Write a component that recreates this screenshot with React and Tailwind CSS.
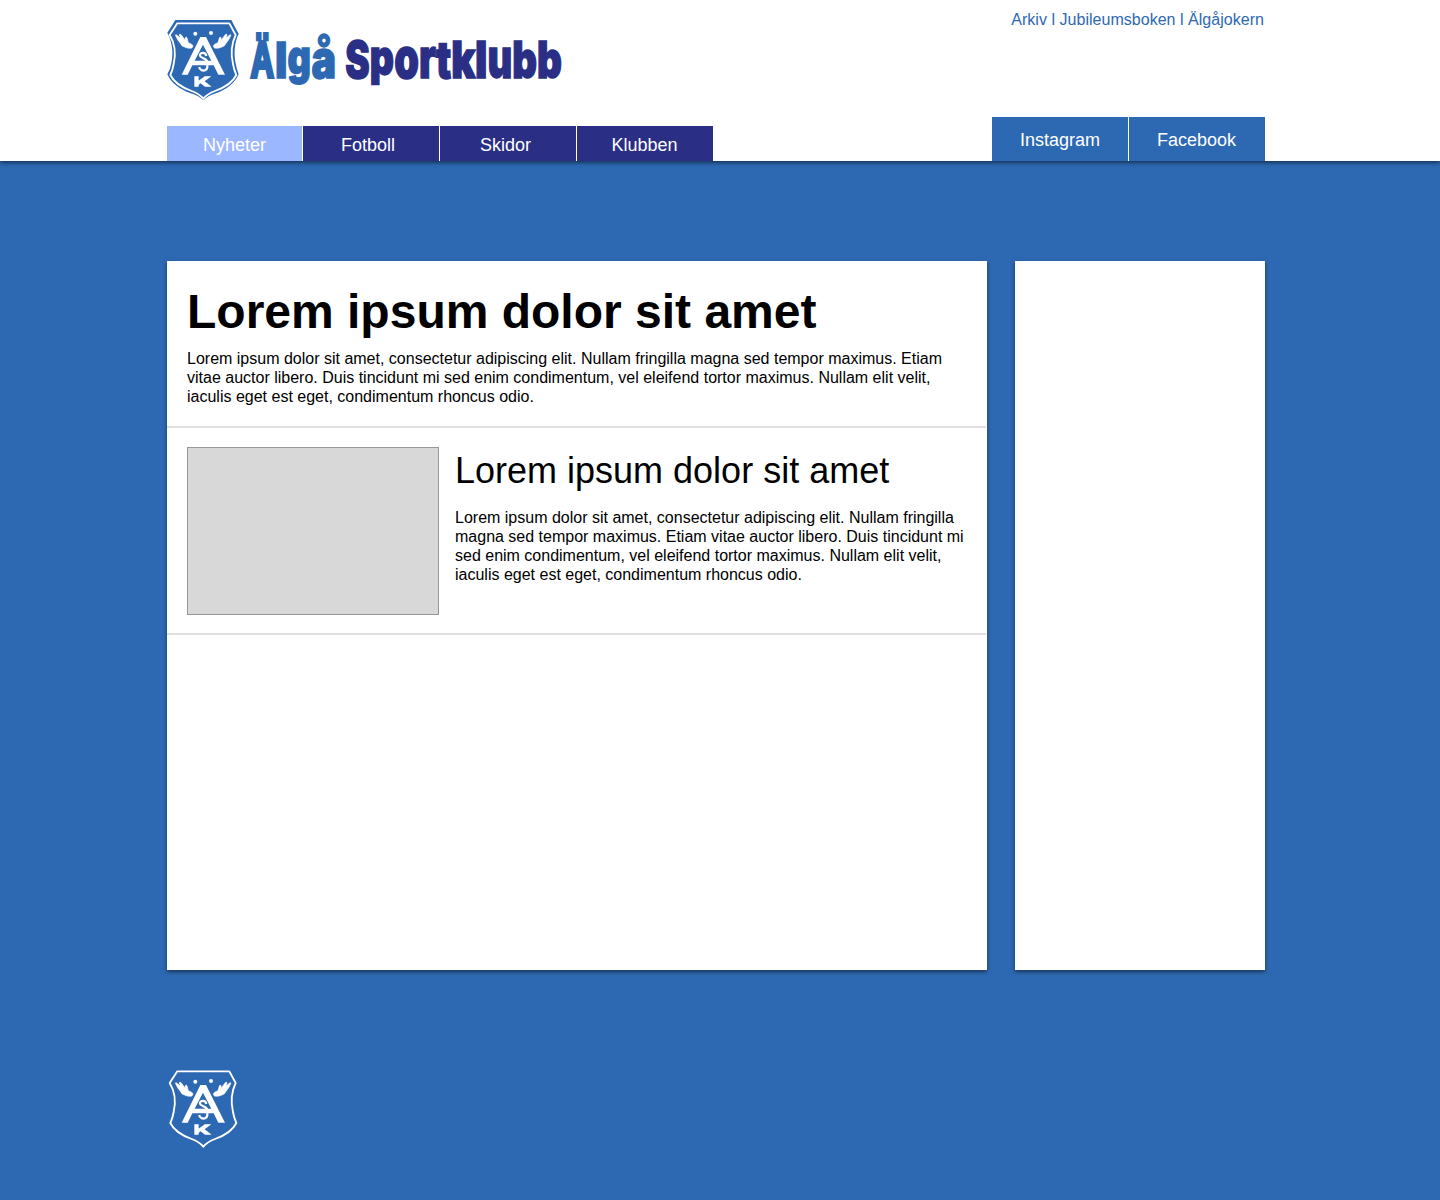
const LOREM =
  'Lorem ipsum dolor sit amet, consectetur adipiscing elit. Nullam fringilla magna sed tempor maximus. Etiam vitae auctor libero. Duis tincidunt mi sed enim condimentum, vel eleifend tortor maximus. Nullam elit velit, iaculis eget est eget, condimentum rhoncus odio.';

const OUTLINE =
  'M52 34 H208 L227 69 C213 98 213 130 219 156 Q222 174 229 189 C216 216 190 228 165 237 C148 243 138 250 130 260 C122 250 112 243 95 237 C70 228 44 216 31 189 Q38 174 41 156 C47 130 47 98 29 69 Z';

function Antler() {
  return (
    <path d="M46 69 Q48 67 51 70 L62 79 L58 69 Q59 64 63 68 L73 81 L76 85 L76 77 Q79 73 81 78 L85 92 Q97 96 99 101 L96 108 Q83 110 76 106 Q64 103 61 94 Q52 84 46 69 Z" />
  );
}

function Emblem({ filled = false }) {
  return (
    <svg viewBox="0 0 270 285" className="block h-[95px] w-[90px] shrink-0" role="img" aria-label="ÄSK">
      {filled && (
        <path
          d="M46 24 H214 L236 66 C223 92 221 126 227 154 Q230 172 236 187 C224 216 196 234 170 243 C151 249 138 256 130 265 C122 256 109 249 90 243 C64 234 34 216 22 187 Q31 172 34 154 C40 126 38 92 22 62 Z"
          fill="#2d69b3"
        />
      )}
      <path d={OUTLINE} fill="none" stroke="#fff" strokeWidth="5.5" strokeLinejoin="round" />
      <g fill="#fff">
        <circle cx="106" cy="65" r="6" />
        <circle cx="153" cy="63" r="6" />
        <g stroke="#fff" strokeWidth="2">
          <Antler />
          <g transform="translate(259 0) scale(-1 1)">
            <Antler />
          </g>
        </g>
        <path
          fillRule="evenodd"
          d="M121 75 H138 L195 188 H175 L161 160 H97 L83 188 H65 Z M129 98 L104 146 H154 Z"
        />
        <path d="M103 193 H116 V206 L134 193 H154 L134 208 L155 224 H135 L122 214 L116 218 V224 H103 Z" />
      </g>
      <path
        d="M139 132 C137 120 120 120 120 130 C120 140 142 138 142 151 L142 162 C143 174 132 178 124 174 C120 172 118 169 118 165"
        fill="none"
        stroke="#fff"
        strokeWidth="6.5"
      />
    </svg>
  );
}

function Glyphs({ letters, fill }) {
  return (
    <g fill={fill} stroke={fill}>
      {letters.map(([ch, x, w, size = 52, y = 54], i) => (
        <text key={i} x={x} y={y} fontSize={size} textLength={w} lengthAdjust="spacingAndGlyphs">
          {ch}
        </text>
      ))}
    </g>
  );
}

function Wordmark() {
  return (
    <svg
      viewBox="0 0 330 65"
      className="mt-[13px] block h-[65px] w-[330px] overflow-visible font-['Inter',sans-serif] font-black"
      strokeWidth="1.4"
      role="img"
      aria-label="Älgå Sportklubb"
    >
      <g className="font-['Liberation_Sans',sans-serif] font-bold" strokeWidth="4">
        <Glyphs fill="#2d69b3" letters={[['Ä', 10.8, 23, 50, 52.3]]} />
      </g>
      <Glyphs fill="#2d69b3" letters={[['l', 34.9, 12.4, 50, 53.3], ['g', 47.5, 23.4, 47.5, 49.3], ['å', 71.4, 24.6, 52.5, 53]]} />
      <Glyphs
        fill="#2a2f85"
        letters={[
          ['S', 105.2, 24.4, 50.5, 53.3],
          ['p', 129.8, 24.2, 49, 50],
          ['o', 154.2, 24.7, 55.5, 53],
          ['r', 179.1, 17, 55.5, 53.3],
          ['t', 196, 15.2, 51, 53.2],
          ['k', 211.2, 24.2, 50.5, 53.3],
          ['l', 235.1, 12.4, 50.5, 53.3],
          ['u', 247.5, 24.7, 55.5, 53],
          ['b', 272.3, 24.7, 50.5, 53.2],
          ['b', 297.1, 24.9, 50.5, 53.2],
        ]}
      />
    </svg>
  );
}

function Tab({ children, className }) {
  return <a className={`flex h-[35px] items-center justify-center pt-[3px] ${className}`}>{children}</a>;
}

export default function App() {
  return (
    <div className="min-h-[1200px] w-full bg-[#2d69b3] font-['Liberation_Sans',Arial,sans-serif] text-black">
      <header className="h-[161px] bg-white shadow-[0_2px_4px_rgba(0,0,0,0.5)]">
        <div className="ml-[167px] flex h-full w-[1098px] justify-between">
          <div className="flex flex-col justify-between">
            <div className="-ml-[7px] flex pt-3">
              <Emblem filled />
              <div className="-ml-[10px]">
                <Wordmark />
              </div>
            </div>
            <nav className="flex gap-px text-lg text-white">
              <Tab className="w-[135px] bg-[#9bb7ff]">Nyheter</Tab>
              <Tab className="w-[136px] bg-[#2a2f85] pr-[6px]">Fotboll</Tab>
              <Tab className="w-[136px] bg-[#2a2f85] pr-[5px]">Skidor</Tab>
              <Tab className="w-[136px] bg-[#2a2f85] pr-px">Klubben</Tab>
            </nav>
          </div>
          <div className="flex flex-col items-end justify-between">
            <div className="whitespace-pre pt-[10px] pr-px text-base leading-[19px] tracking-[0.03px] text-[#2d69b3]">
              Arkiv l Jubileumsboken l Älgåjokern
            </div>
            <div className="flex gap-px text-lg text-white">
              <a className="flex h-11 w-[136px] items-center justify-center bg-[#2d69b3] pt-[2px]">Instagram</a>
              <a className="flex h-11 w-[136px] items-center justify-center bg-[#2d69b3] pt-[2px] pr-px">Facebook</a>
            </div>
          </div>
        </div>
      </header>

      <div className="mt-[100px] ml-[167px] flex h-[709px] w-[1098px] justify-between">
        <main className="w-[820px] bg-white shadow-[0_2px_4px_rgba(0,0,0,0.5)]">
          <article className="mr-px h-[167px] border-b-2 border-[#dfdfdf] px-5 pt-[23px]">
            <h1 className="text-5xl leading-[56px] font-bold">Lorem ipsum dolor sit amet</h1>
            <p className="mt-[9px] text-base leading-[19px]">{LOREM}</p>
          </article>
          <article className="mr-px flex h-[207px] gap-4 border-b-2 border-[#dfdfdf] pt-[19px] pl-5">
            <div className="h-[168px] w-[252px] shrink-0 border border-[#979797] bg-[#d8d8d8]" />
            <div className="w-[515px]">
              <h2 className="pt-[3px] text-4xl leading-[42px]">Lorem ipsum dolor sit amet</h2>
              <p className="mt-4 text-base leading-[19px]">{LOREM}</p>
            </div>
          </article>
        </main>
        <aside className="w-[250px] bg-white shadow-[0_2px_4px_rgba(0,0,0,0.5)]" />
      </div>

      <footer className="ml-40 pt-[90px]">
        <Emblem />
      </footer>
    </div>
  );
}
